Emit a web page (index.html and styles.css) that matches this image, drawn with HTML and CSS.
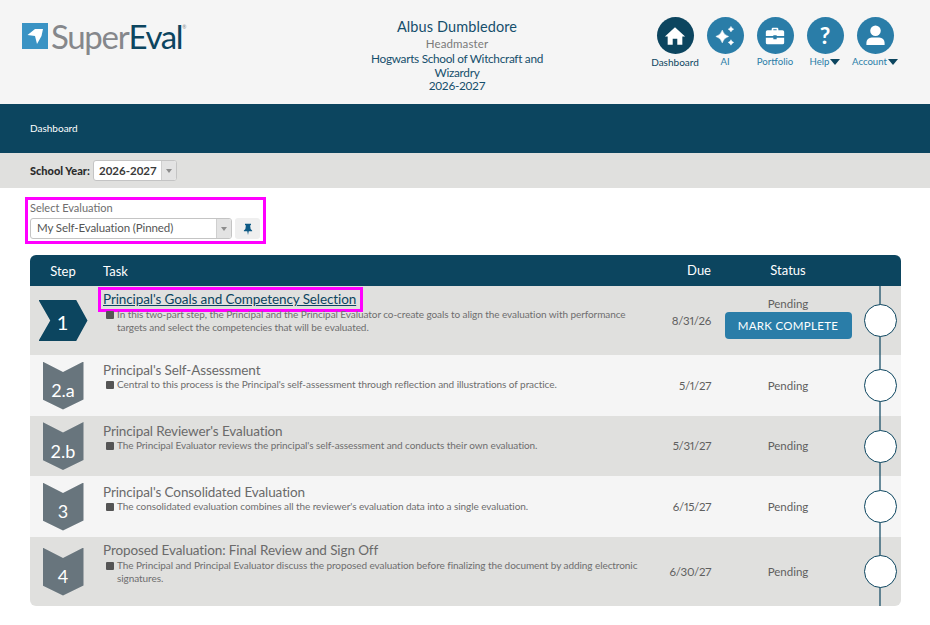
FILE: index.html
```html
<!DOCTYPE html>
<html lang="en">
<head>
<meta charset="utf-8">
<title>SuperEval Dashboard</title>
<link rel="stylesheet" href="styles.css">
</head>
<body>
<header class="top">
  <div class="logo">
    <svg class="logo-mark" viewBox="0 0 26 26" width="26" height="26"><rect width="26" height="26" fill="#3a93c4"/><path d="M5.500 12 L13 6 H21 L19.500 13 L15 21 L13 13 Z" fill="#fff"/></svg>
    <span class="logo-text"><span class="logo-super">Super</span><span class="logo-eval">Eval</span><sup class="logo-r">®</sup></span>
  </div>
  <div class="who">
    <div class="who-name">Albus Dumbledore</div>
    <div class="who-role">Headmaster</div>
    <div class="who-school">Hogwarts School of Witchcraft and Wizardry</div>
    <div class="who-year">2026-2027</div>
  </div>
  <nav class="icons">
    <a class="icon-item current"><span class="circle"><svg viewBox="0 0 24 24" width="22" height="22"><path d="M12 2.500 L1 12.500 L4 12.500 L4 21.500 L9.500 21.500 L9.500 15 L14.500 15 L14.500 21.500 L20 21.500 L20 12.500 L23 12.500 Z" fill="#fff"/></svg></span><span class="lbl">Dashboard</span></a>
    <a class="icon-item"><span class="circle"><svg viewBox="0 0 24 24" width="22" height="22"><path d="M9 5.500 Q10.500 11 16 12.500 Q10.500 14 9 19.500 Q7.500 14 2 12.500 Q7.500 11 9 5.500 Z M18.500 1.500 Q19 3.500 21.500 4.500 Q19 5.500 18.500 7.500 Q18 5.500 15.500 4.500 Q18 3.500 18.500 1.500 Z M18.500 16 Q19 18 21.500 19 Q19 20 18.500 22 Q18 20 15.500 19 Q18 18 18.500 16 Z" fill="#fff" stroke="#fff" stroke-width="0.500" stroke-linejoin="round"/></svg></span><span class="lbl">AI</span></a>
    <a class="icon-item"><span class="circle"><svg viewBox="0 0 24 24" width="20" height="20"><path d="M8 5 V3.500 A1.500 1.500 0 0 1 9.500 2 H14.500 A1.500 1.500 0 0 1 16 3.500 V5 H21 A2 2 0 0 1 23 7 V12 H14 V11 H10 V12 H1 V7 A2 2 0 0 1 3 5 Z M10 5 H14 V4 H10 Z M1 14 H10 V16 H14 V14 H23 V20 A2 2 0 0 1 21 22 H3 A2 2 0 0 1 1 20 Z" fill="#fff" fill-rule="evenodd"/></svg></span><span class="lbl">Portfolio</span></a>
    <a class="icon-item"><span class="circle help">?</span><span class="lbl">Help<i class="caret"></i></span></a>
    <a class="icon-item"><span class="circle"><svg viewBox="0 0 24 24" width="23" height="23"><circle cx="12" cy="7" r="5.500" fill="#fff"/><path d="M2.500 22 V19.500 A5.500 5.500 0 0 1 8 14 H16 A5.500 5.500 0 0 1 21.500 19.500 V22 Z" fill="#fff"/></svg></span><span class="lbl">Account<i class="caret"></i></span></a>
  </nav>
</header>

<div class="crumb">Dashboard</div>

<div class="filter">
  <span class="filter-label">School Year:</span>
  <div class="select year"><span class="select-value">2026-2027</span><span class="select-arrow"></span></div>
</div>

<main class="main">
  <section class="eval-box">
    <div class="eval-label">Select Evaluation</div>
    <div class="eval-row">
      <div class="select eval"><span class="select-value">My Self-Evaluation (Pinned)</span><span class="select-arrow"></span></div>
      <button class="pin"><svg viewBox="0 0 16 16" width="12" height="12"><path d="M4 1 H12 V3 H10.800 L11.500 8 L13.500 10 V11 H9 L8 16 L7 11 H2.500 V10 L4.500 8 L5.200 3 H4 Z" fill="#0e5a85"/></svg></button>
    </div>
  </section>

  <section class="table">
    <div class="row head">
      <div class="c-step">Step</div>
      <div class="c-task">Task</div>
      <div class="c-due">Due</div>
      <div class="c-status">Status</div>
      <div class="c-line"></div>
    </div>

    <div class="row r1 shade">
      <div class="c-step"><span class="arrow">1</span></div>
      <div class="c-task first">
        <a class="task-title link">Principal's Goals and Competency Selection</a>
        <div class="desc"><i class="sq"></i><span>In this two-part step, the Principal and the Principal Evaluator co-create goals to align the evaluation with performance targets and select the competencies that will be evaluated.</span></div>
      </div>
      <div class="c-due">8/31/26</div>
      <div class="c-status with-action"><div>Pending</div><button class="mark">MARK COMPLETE</button></div>
      <div class="c-line"><span class="dot"></span></div>
    </div>

    <div class="row r2">
      <div class="c-step"><span class="badge">2.a</span></div>
      <div class="c-task">
        <div class="task-title">Principal's Self-Assessment</div>
        <div class="desc"><i class="sq"></i><span>Central to this process is the Principal's self-assessment through reflection and illustrations of practice.</span></div>
      </div>
      <div class="c-due">5/1/27</div>
      <div class="c-status">Pending</div>
      <div class="c-line"><span class="dot"></span></div>
    </div>

    <div class="row r3 shade">
      <div class="c-step"><span class="badge">2.b</span></div>
      <div class="c-task">
        <div class="task-title">Principal Reviewer's Evaluation</div>
        <div class="desc"><i class="sq"></i><span>The Principal Evaluator reviews the principal's self-assessment and conducts their own evaluation.</span></div>
      </div>
      <div class="c-due">5/31/27</div>
      <div class="c-status">Pending</div>
      <div class="c-line"><span class="dot"></span></div>
    </div>

    <div class="row r4">
      <div class="c-step"><span class="badge">3</span></div>
      <div class="c-task">
        <div class="task-title">Principal's Consolidated Evaluation</div>
        <div class="desc"><i class="sq"></i><span>The consolidated evaluation combines all the reviewer's evaluation data into a single evaluation.</span></div>
      </div>
      <div class="c-due">6/15/27</div>
      <div class="c-status">Pending</div>
      <div class="c-line"><span class="dot"></span></div>
    </div>

    <div class="row r5 shade">
      <div class="c-step"><span class="badge">4</span></div>
      <div class="c-task">
        <div class="task-title">Proposed Evaluation: Final Review and Sign Off</div>
        <div class="desc"><i class="sq"></i><span>The Principal and Principal Evaluator discuss the proposed evaluation before finalizing the document by adding electronic signatures.</span></div>
      </div>
      <div class="c-due">6/30/27</div>
      <div class="c-status">Pending</div>
      <div class="c-line"><span class="dot"></span></div>
    </div>
  </section>
</main>
</body>
</html>
```
FILE: styles.css
```css
* { box-sizing: border-box; }
html, body { margin: 0; padding: 0; }
body {
  width: 930px;
  height: 625px;
  overflow: hidden;
  background: #fff;
  font-family: Lato, "Noto Sans", sans-serif;
  color: #5f5f5f;
}

.top {
  height: 104px;
  background: #f5f5f5;
  display: grid;
  grid-template-columns: 367px 180px 1fr;
}
.logo {
  display: flex;
  align-items: flex-start;
  padding: 23px 0 0 22px;
  gap: 3px;
}
.logo-mark { flex: none; }
.logo-text {
  font-size: 33px;
  line-height: 27px;
  font-weight: 400;
  letter-spacing: -1.3px;
  display: flex;
}
.logo-super { color: #85878b; }
.logo-eval { color: #0c455f; font-weight: 400; }
.logo-r { font-size: 5px; line-height: 8px; color: #85878b; letter-spacing: 0; }

.who { text-align: center; padding-top: 18px; }
.who-name { font-size: 14.500px; line-height: 18px; color: #154f6c; letter-spacing: 0.1px; }
.who-role { font-size: 11.500px; line-height: 14px; margin-top: 1px; color: #7a7a7a; letter-spacing: 0.1px; }
.who-school, .who-year { font-size: 11.800px; line-height: 13.500px; color: #154f6c; letter-spacing: -0.3px; }
.who-school { margin-top: 1px; }

.icons {
  display: flex;
  padding: 17px 0 0 103px;
}
.icon-item {
  width: 50px;
  flex: none;
  display: flex;
  flex-direction: column;
  align-items: center;
}
.circle {
  width: 37px;
  height: 37px;
  border-radius: 50%;
  background: #2a7da8;
  display: flex;
  align-items: center;
  justify-content: center;
  color: #fff;
}
.current .circle { background: #0c455f; }
.help { font-size: 23px; font-weight: 700; line-height: 37px; }
.lbl {
  margin-top: 1px;
  font-size: 9.600px;
  line-height: 14px;
  color: #2a7da8;
  white-space: nowrap;
  display: flex;
  align-items: center;
  gap: 1px;
}
.current .lbl { color: #0c455f; font-size: 10px; }
.caret {
  width: 0;
  height: 0;
  border: 5px solid transparent;
  border-top: 6px solid #0c455f;
  border-bottom: 0;
  display: block;
}

.crumb {
  height: 49px;
  background: #0c455f;
  color: #fff;
  font-size: 10px;
  line-height: 49px;
  padding-left: 30px;
}

.filter {
  height: 35px;
  background: #e0e0de;
  display: flex;
  align-items: center;
  padding-left: 30px;
  gap: 3px;
}
.filter-label { width: 60px; white-space: nowrap; font-size: 11px; font-weight: 900; color: #2b2b2b; }

.select {
  display: flex;
  height: 21px;
  border: 1px solid #c4c4c4;
  border-radius: 3px;
  background: #fff;
  overflow: hidden;
}
.select-value { flex: 1; white-space: nowrap; line-height: 18px; }
.select-arrow {
  width: 15px;
  flex: none;
  background: #e3e3e3;
  border-left: 1px solid #cfcfcf;
  position: relative;
}
.select-arrow::after {
  content: "";
  position: absolute;
  left: 4px;
  top: 8px;
  border: 3px solid transparent;
  border-top: 4px solid #8d8d8d;
  border-bottom: 0;
}
.year { width: 84px; }
.year .select-value { font-size: 11.500px; line-height: 19px; font-weight: 700; color: #3a3a3a; padding-left: 5px; }

.main { padding: 9px 29px 0 30px; }
.eval-box {
  width: 241px;
  height: 47px;
  margin-left: -5px;
  padding: 1px 0 0 2px;
  border: 3px solid #ff00ff;
}
.eval-label { font-size: 11px; line-height: 14px; color: #6e6e6e; }
.eval-row { display: flex; gap: 3px; margin-top: 3px; }
.eval { width: 202px; }
.eval .select-value { font-size: 11.500px; padding-left: 6px; color: #555; letter-spacing: -0.1px; }
.pin {
  width: 25px;
  height: 21px;
  padding: 4px 0 0;
  border: 0;
  border-radius: 3px;
  background: #efefef;
}

.table {
  margin-top: 11px;
  border-radius: 6px;
  overflow: hidden;
}
.row {
  display: grid;
  grid-template-columns: 73px 552px 56px 154px 36px;
  background: #f5f5f5;
  font-size: 11.500px;
}
.row.shade { background: #e0e0de; }
.row > div { display: flex; align-items: center; }
.head {
  height: 31px;
  background: #0c455f;
  color: #fff;
  font-size: 13px;
}
.r1 { height: 69px; }
.r2 { height: 61px; }
.r3 { height: 60px; }
.r4 { height: 61px; }
.r5 { height: 69px; }

.c-step { justify-content: center; padding-right: 7px; }
.row > .c-task { display: block; padding-top: 7px; padding-right: 14px; }
.head > .c-task { padding-top: 8px; }
.row > .first { padding-top: 1px; }
.r4 > .c-task { padding-top: 8px; }
.r5 > .c-task { padding-top: 5px; }
.r5 .desc { padding-top: 1px; }
.row > .c-due { justify-content: flex-end; font-variant-numeric: proportional-nums; letter-spacing: -0.3px; padding-bottom: 1px; }
.head > .c-due { letter-spacing: 0; }
.row > .c-status { justify-content: center; flex-direction: column; text-align: center; padding-bottom: 1px; }
.row > .with-action { padding-bottom: 6px; }
.c-line { position: relative; justify-content: flex-start; }
.r1 .c-line::before, .r2 .c-line::before, .r3 .c-line::before, .r4 .c-line::before, .r5 .c-line::before {
  content: "";
  position: absolute;
  left: 14px;
  top: 0;
  bottom: 0;
  width: 2px;
  background: #0c455f;
  opacity: .6;
}
.dot {
  position: relative;
  width: 33px;
  height: 33px;
  margin-left: -1px;
  border: 1.500px solid #0c455f;
  border-radius: 50%;
  background: #fff;
}

.task-title { font-size: 13.500px; line-height: 16px; color: #6a6a6a; letter-spacing: -0.1px; }
.link {
  display: inline-block;
  color: #0c455f;
  text-decoration: underline;
  border: 3px solid #ff00ff;
  line-height: 19px;
  padding: 0 4px 0 2px;
  margin: 0 0 -4px -5px;
}
.desc {
  display: flex;
  gap: 4px;
  font-size: 10px;
  line-height: 13px;
  letter-spacing: -0.07px;
  color: #6e6e6e;
}
.sq {
  flex: none;
  width: 8px;
  height: 8px;
  margin: 3px -1px 0 3px;
  background: #555;
  border-radius: 1px;
}

.arrow {
  width: 49px;
  height: 41px;
  background: #0c455f;
  clip-path: polygon(0 0, 77% 0, 100% 50%, 77% 100%, 0 100%, 24% 50%);
  color: #fff;
  font-size: 20px;
  display: flex;
  align-items: center;
  justify-content: center;
  padding-top: 2px;
  padding-right: 1px;
}
.badge {
  width: 41px;
  height: 48px;
  background: #68757d;
  clip-path: polygon(0 0, 50% 22%, 100% 0, 100% 79%, 50% 100%, 0 79%);
  color: #fff;
  font-size: 18px;
  display: flex;
  align-items: center;
  justify-content: center;
  padding-top: 9px;
}

.mark {
  width: 127px;
  height: 27px;
  margin-top: 2px;
  padding: 0;
  border: 0;
  border-radius: 4px;
  background: #2a7da8;
  color: #fff;
  font-family: inherit;
  font-size: 11.500px;
  letter-spacing: 0.3px;
}
```
